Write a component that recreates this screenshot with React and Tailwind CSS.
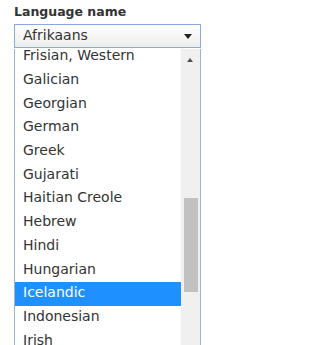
const LANGUAGES = [
  "Frisian, Western",
  "Galician",
  "Georgian",
  "German",
  "Greek",
  "Gujarati",
  "Haitian Creole",
  "Hebrew",
  "Hindi",
  "Hungarian",
  "Icelandic",
  "Indonesian",
  "Irish",
  "Italian",
];

const SELECTED = "Icelandic";

export default function App() {
  return (
    <div
      className="min-h-[345px] bg-white pl-[14px] pt-[4px] text-[#333]"
      style={{ fontFamily: '"DejaVu Sans", Verdana, sans-serif' }}
    >
      <label className="block text-[12.5px] font-bold leading-[16px] text-[#333]">
        Language name
      </label>

      <div className="mt-[4px] flex h-[24px] w-[187px] items-center justify-between border border-[#86abdc] bg-gradient-to-b from-white to-[#ececec] pl-[8px] pr-[8px]">
        <span className="self-start text-[14px] leading-[20px] text-[#333]">
          Afrikaans
        </span>
        <svg width="8" height="5" viewBox="0 0 8 5" className="mt-[1px]">
          <path d="M0 0h8L4 5z" fill="#222" />
        </svg>
      </div>

      <div className="mt-[1px] flex h-[296px] w-[187px] overflow-hidden border-x border-[#9fb3d2] bg-white">
        <ul className="mt-[-3.7px] w-[166px] shrink-0">
          {LANGUAGES.map((name) => (
            <li
              key={name}
              className={[
                "h-[23.7px] whitespace-nowrap pl-[8px] text-[14px] leading-[21.7px]",
                name === SELECTED ? "bg-[#1e90ff] text-white" : "text-[#333]",
              ].join(" ")}
            >
              {name}
            </li>
          ))}
        </ul>

        <div className="flex w-[19px] flex-col bg-[#f0f0f0] pt-[9px]">
          <svg width="6" height="4" viewBox="0 0 6 4" className="ml-[6px]">
            <path d="M3 0l3 4H0z" fill="#505050" />
          </svg>
          <div className="ml-[3px] mt-[136px] h-[94px] w-[14px] bg-[#c1c1c1]" />
        </div>
      </div>
    </div>
  );
}
